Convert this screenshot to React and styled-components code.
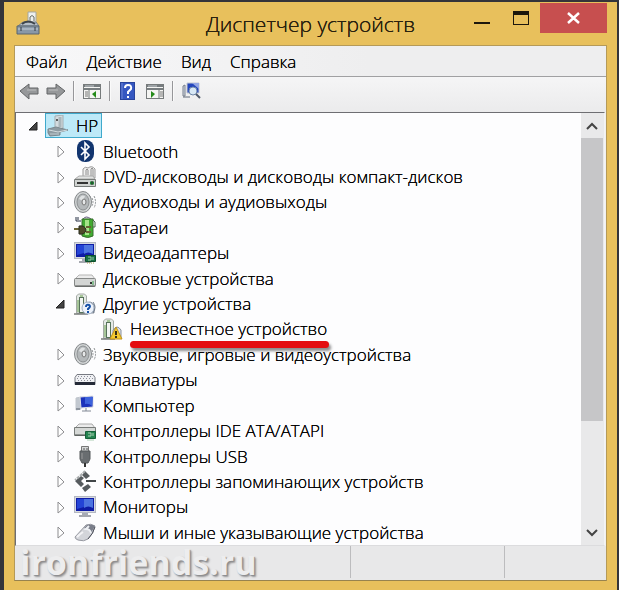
import React, { useState } from "react";
import styled, { createGlobalStyle, css } from "styled-components";

const GlobalStyle = createGlobalStyle`
  * { box-sizing: border-box; }
  body {
    margin: 0;
    background: #34343a;
    font-family: "Open Sans", "Noto Sans", sans-serif;
    font-size: 17px;
    font-weight: 300;
    color: #000;
    text-shadow: 0 0 0 #000;
  }
  button { font: inherit; color: inherit; text-shadow: inherit; border: 0; padding: 0; background: none; }
  ul { list-style: none; margin: 0; padding: 0; }
`;

const Desktop = styled.div`
  min-height: 100vh;
  display: flex;
  padding: 2px 2px 0 4px;
`;

const Window = styled.main`
  flex: 1;
  min-width: 0;
  display: flex;
  flex-direction: column;
  background: #e8c05c;
  padding: 0 10px 9px;
`;

const TitleBar = styled.header`
  height: 43px;
  display: grid;
  grid-template-columns: 1fr auto 1fr;
  align-items: start;
`;

const AppIcon = styled.span`
  padding: 9px 0 0 2px;
  line-height: 0;
`;

const Title = styled.h1`
  margin: 0;
  font-size: 21px;
  font-weight: 300;
  line-height: 44px;
  white-space: nowrap;
  color: #2a210e;
`;

const WindowControls = styled.div`
  display: flex;
  justify-content: flex-end;
  padding-top: 1px;
`;

const WindowButton = styled.button`
  width: ${(p) => (p.$close ? 67 : 39)}px;
  height: 30px;
  display: grid;
  place-items: center;
  background: ${(p) => (p.$close ? "#c74f4f" : "transparent")};
`;

const Client = styled.div`
  flex: 1;
  display: flex;
  flex-direction: column;
  background: #f0f0f1;
  border: 1px solid #b59a58;
  border-bottom-color: #98834e;
`;

const MenuBar = styled.nav`
  height: 31px;
  display: flex;
  gap: 19px;
  padding-left: 11px;
  background: linear-gradient(90deg, #f8f8f9, #eeeeef 60%);
  border-bottom: 1px solid #a0a0a2;
`;

const MenuItem = styled.button`
  line-height: 32px;
`;

const ToolBar = styled.div`
  height: 35px;
  display: flex;
  align-items: center;
  gap: 7px;
  padding: 0 4px 7px;
  background: linear-gradient(#f5f5f6, #ebebec);
`;

const ToolButton = styled.button`
  width: 20px;
  height: 22px;
  line-height: 0;
`;

const Separator = styled.span`
  width: 2px;
  height: 20px;
  border-left: 1px solid #97979a;
  border-right: 1px solid #fafafa;
`;

const TreePanel = styled.section`
  flex: 1;
  display: flex;
  margin-right: 1px;
  background: #fdfdfe;
  border: 1px solid #6e6e72;
  border-right-color: #f4f4f4;
  border-bottom-color: #dcdcde;
`;

const Tree = styled.ul`
  flex: 1;
  min-width: 0;
  display: grid;
  grid-auto-rows: minmax(25px, 1fr);
`;

const Row = styled.li`
  display: flex;
  align-items: center;
  gap: 3px;
  padding-left: ${(p) => 8 + p.$level * 27}px;
`;

const Toggle = styled.button`
  width: 18px;
  height: 18px;
  display: grid;
  place-items: center;
`;

const ToggleSpace = styled.span`
  width: 18px;
`;

const Item = styled.span`
  height: 25px;
  display: flex;
  align-items: center;
  gap: 7px;
  padding: 0 3px 0 1px;
  border: 1px solid transparent;
  white-space: nowrap;
  ${(p) =>
    p.$selected &&
    css`
      background: #bde9f8;
      border-color: #3fa9cc;
    `}
  svg { flex: none; }
`;

const ItemText = styled.span`
  position: relative;
  line-height: 23px;
`;

const MarkerLine = styled.span`
  position: absolute;
  left: 0;
  right: -2px;
  bottom: -8px;
  height: 7px;
  border-radius: 4px;
  background: #e40d10;
  box-shadow: 2px 3px 3px rgba(0, 0, 0, 0.45);
  z-index: 1;
`;

const ScrollBar = styled.div`
  width: 23px;
  padding-right: 1px;
  display: flex;
  flex-direction: column;
  background: #e9e9ea;
`;

const ScrollButton = styled.button`
  height: 25px;
  display: grid;
  place-items: center;
`;

const ScrollTrack = styled.div`
  flex: 1;
  display: flex;
  flex-direction: column;
`;

const ScrollThumb = styled.div`
  height: 74%;
  background: #c6c6c8;
`;

const StatusBar = styled.footer`
  height: 34px;
  display: grid;
  grid-template-columns: 336fr 154fr 101fr;
  background: #e8e8e9;
`;

const StatusCell = styled.div`
  border-right: 1px solid #bcbcbe;
  margin-bottom: 2px;
  &:last-child { border-right: 0; }
`;

const Watermark = styled.span`
  display: block;
  padding-left: 5px;
  font-size: 34px;
  font-weight: 700;
  line-height: 32px;
  color: #ededee;
  text-shadow: 1px 1px 1px #8d8d8f, 2px 2px 2px #99999b;
`;

const Svg = ({ children, w = 22, h = 22, box = "0 0 22 22" }) => (
  <svg width={w} height={h} viewBox={box} fill="none" aria-hidden="true">
    {children}
  </svg>
);

const CaseIcon = () => (
  <Svg w={24} h={24} box="0 0 24 24">
    <path d="M12 1h8v14h-8z" fill="#eef0ee" stroke="#a4a79f" />
    <path d="M14 10V6q2-3 4 0v4" stroke="#666d65" />
    <path d="M2 15l5-4h13l3 4z" fill="#b4bec8" stroke="#737d87" />
    <path d="M6 13q6-5 13 0" stroke="#3e454c" strokeWidth="2" />
    <path d="M1 15h22v8H1z" fill="#8998a7" stroke="#59646e" />
    <path d="M2 18h20" stroke="#c5ced8" />
    <path d="M5 16v4M19 16v4" stroke="#303942" />
  </Svg>
);

const PcCaseIcon = () => (
  <Svg>
    <path d="M8 1l8-1v13l-8 2z" fill="#d4dce0" stroke="#a3adb1" />
    <path d="M13 2v10" stroke="#aab6bb" strokeWidth="3" />
    <circle cx="10" cy="5" r="1" fill="#333" />
    <path d="M1 14l8-2 8 2 4 1-8 2v3l-10 1-2-3z" fill="#8e9ba2" stroke="#7c888e" />
    <path d="M2 15l9 2 9-2" stroke="#d5dde0" />
    <path d="M3 19h9" stroke="#bfcbd0" />
  </Svg>
);

const BluetoothIcon = () => (
  <Svg>
    <rect x="3" y="0" width="17" height="22" rx="8" fill="#12356f" />
    <path d="M7 7l8 8-4 4V3l4 4-8 8" stroke="#fff" strokeWidth="1.6" />
  </Svg>
);

const DvdIcon = () => (
  <Svg>
    <path d="M9 11V3q2-3 5-1 4-3 7 1v9z" fill="#efefef" stroke="#999" />
    <path d="M12 9V4q1-2 2 0v5M17 10V3q1-2 2 0v8" stroke="#909090" />
    <path d="M1 13l4-3h14l2 3z" fill="#e1e3e2" stroke="#aaa" />
    <path d="M.5 13.5h21v7H.5z" fill="#d0d3d1" stroke="#767a78" />
    <path d="M3 17h11" stroke="#333" strokeWidth="2" />
    <path d="M16 17h4" stroke="#248a3b" strokeWidth="3" />
    <path d="M18 15v4" stroke="#222" />
  </Svg>
);

const SpeakerIcon = () => (
  <Svg>
    <path d="M11 1l5 4v11l-5 5z" fill="#9c9fa0" stroke="#777" />
    <ellipse cx="9" cy="11" rx="8.5" ry="10.5" fill="#d0d3d4" stroke="#85898b" />
    <ellipse cx="9" cy="11" rx="6" ry="8" fill="#b4b8ba" stroke="#8d9193" />
    <path d="M5 8q2-5 6-3l-2 5z" fill="#dfe2e3" />
    <ellipse cx="10" cy="11" rx="2" ry="3" fill="#e6e8e9" stroke="#777" />
    <path d="M18 7q2 4 0 8M20 5q3 6 0 12" stroke="#8d9193" strokeDasharray="2 1" />
  </Svg>
);

const BatteryIcon = () => (
  <Svg>
    <path d="M9 3q3-4 8 0" fill="#d8ded8" stroke="#6a5f85" />
    <path d="M8 3h11v17q-5 3-11 0z" fill="#42aa31" stroke="#376e2c" />
    <path d="M13 4v15" stroke="#a5e388" strokeWidth="4" />
    <path d="M2 1v4h5M4 1v3" stroke="#273044" />
    <path d="M0 13h6M12 11h5M12 16h5" stroke="#6a6435" strokeWidth="2" />
    <path d="M5 10q6-1 7 4-1 5-7 4z" fill="#504b2a" stroke="#292c20" />
    <path d="M19 4l2 2v5h-2" stroke="#4b6650" />
  </Svg>
);

const MonitorShape = () => (
  <>
    <rect x="0.5" y="0.5" width="21" height="16" fill="#d6d9e0" stroke="#b4b8c2" />
    <rect x="2" y="2" width="18" height="13" fill="#0f1ca6" />
    <path d="M10 3h9v9q-5-3-9 0z" fill="#4d74e0" />
    <path d="M3 3h7v8l-7 2z" fill="#2444d6" />
    <path d="M8 17h6v2H8z" fill="#a7abb6" />
    <path d="M5 20h12" stroke="#4d5361" />
  </>
);

const MonitorIcon = () => (
  <Svg>
    <MonitorShape />
  </Svg>
);

const VideoIcon = () => (
  <Svg>
    <MonitorShape />
    <path d="M11.5 13.5h10v6h-10z" fill="#176f44" stroke="#0c4e2d" />
    <path d="M14 15h3v3h-3M19 15v3" stroke="#9bc9a3" />
    <path d="M13 21h8" stroke="#a79d4b" strokeDasharray="1 1" />
  </Svg>
);

const DiskIcon = () => (
  <Svg>
    <path d="M1 12l4-4h13l3 4z" fill="#ececec" stroke="#b5b5b5" />
    <rect x="0.5" y="11.5" width="21" height="8" rx="1" fill="#d3d5d4" stroke="#858887" />
    <path d="M1 19h20" stroke="#525554" />
    <path d="M16 16h2" stroke="#333" strokeWidth="2" />
    <path d="M19 14v4" stroke="#39a14b" />
  </Svg>
);

const DeviceBase = () => (
  <>
    <path d="M2.5 20V3l2-2h6l2 2v17z" fill="#e4e9e5" stroke="#a5aba6" />
    <rect x="5.5" y="4.5" width="4" height="15" fill="#f4f6f3" stroke="#57735b" />
    <path d="M6 3h3M4 7v12" stroke="#69a04b" />
    <path d="M0 21h14" stroke="#343b36" />
    <path d="M12 12q4-6 8 0v8h-8z" fill="#dce2ea" stroke="#89909a" />
  </>
);

const OtherIcon = () => (
  <Svg>
    <DeviceBase />
    <circle cx="14" cy="15" r="6" fill="#edf2fa" stroke="#a3b2c6" />
    <path d="M19 9q4 5 0 11" stroke="#6c7888" />
    <path d="M12 14q0-3 3-2 2 1 0 3l-1 1v1M14 18v2" stroke="#1752a8" strokeWidth="2" />
  </Svg>
);

const UnknownIcon = () => (
  <Svg>
    <DeviceBase />
    <path d="M15 9l6 12H9z" fill="#f4cb2e" stroke="#c0921a" />
    <path d="M15 13v4M15 18v2" stroke="#352d14" strokeWidth="2" />
  </Svg>
);

const KeyboardIcon = () => (
  <Svg>
    <path d="M3 5.500h16l2 3v7H1v-7z" fill="#f0f1f4" stroke="#777a82" />
    <path d="M4 7.500h14M3 9.500h16M4 11.500h14" stroke="#8d909a" strokeDasharray="1 2" />
    <path d="M1 13h20v3H1z" fill="#252a38" />
  </Svg>
);

const ComputerIcon = () => (
  <Svg>
    <path d="M2 4l5-1v12l-5 1z" fill="#c2c8d0" stroke="#c0c5cc" />
    <path d="M6 3l13-1v11l-12 1z" fill="#1b31bb" stroke="#dde0e6" />
    <path d="M11 3h8l-1 9q-3-3-7-2z" fill="#3d62dc" />
    <path d="M12 14v3M8 17h9" stroke="#818894" />
    <path d="M2 14h4v2H2z" fill="#8d949e" />
  </Svg>
);

const IdeIcon = () => (
  <Svg>
    <path d="M1 8l4-4h13l3 4z" fill="#ececec" stroke="#aaa" />
    <path d="M.5 7.5h21v8H.5z" fill="#d5d8d6" stroke="#777b79" />
    <path d="M1 15h10" stroke="#4b504e" />
    <path d="M11.5 11.5h10v7h-10z" fill="#248450" stroke="#176039" />
    <path d="M14 13h3v3h-3M19 13v3M13 20h7" stroke="#aed0b4" />
  </Svg>
);

const UsbIcon = () => (
  <Svg>
    <path d="M7.5 1.5h7v6h-7z" fill="#d5d7d8" stroke="#777" />
    <path d="M10 3v2M13 3v2" stroke="#555" />
    <path d="M6 6h10v8l-2 4H8l-2-4z" fill="#696d70" stroke="#55585b" />
    <path d="M8 8v6" stroke="#999" />
    <path d="M11 18v4" stroke="#333" strokeWidth="2" />
  </Svg>
);

const StorageIcon = () => (
  <Svg>
    <path d="M16 6l-5-5-3 4 4 4zM7 6l-6 5 6 6 3-3-3-3 3-3zM8 18l3 4 6-5-3-3z" fill="#565b5e" />
    <path d="M11 1l-4 4-6 5" stroke="#a9adae" strokeWidth="2" strokeDasharray="3 1" />
    <path d="M12 11h10" stroke="#414648" strokeWidth="2" />
  </Svg>
);

const MouseIcon = () => (
  <Svg>
    <path d="M1 16L12 4q5-2 9 1-1 7-7 13-4 3-10 1-3-1-3-3z" fill="#d3d5da" stroke="#9698a0" />
    <path d="M13 4q5-1 8 1l-4 7q-1-5-7-5z" fill="#7a7e8a" />
    <path d="M15 5l-3 3q4 0 5 4" stroke="#eef0f4" strokeWidth="2" />
    <path d="M14 18q5-5 7-12" stroke="#4f525d" />
    <path d="M3 16q3-3 6-5" stroke="#f3f3f6" strokeWidth="2" />
  </Svg>
);

const ArrowIcon = ({ right }) => (
  <Svg w={20} box="0 0 20 22">
    <path
      d={right ? "M1 8h9V4l9 7-9 8v-5H1z" : "M19 8h-9V4l-9 7 9 8v-5h9z"}
      fill="#96989a"
      stroke="#626466"
    />
    <path d={right ? "M3 10h9" : "M8 10h9"} stroke="#bcbdbe" />
  </Svg>
);

const PaneIcon = ({ right }) => (
  <Svg w={20} box="0 0 20 22">
    <rect x="1.5" y="4.5" width="17" height="14" fill="#f5f5f3" stroke="#777b7c" />
    <path d="M2 6h16M2 9h16" stroke="#777d80" strokeWidth="2" />
    <path d="M3 6h9" stroke="#c7cccf" />
    <path d={right ? "M14 9v9" : "M7 9v9"} stroke="#737879" />
    <path d={right ? "M15 12h3m-3 2h3m-3 2h3" : "M3 12h3m-3 2h3m-3 2h3"} stroke="#777" />
    <path d={right ? "M6 11l4 3-4 4z" : "M14 11l-4 3 4 4z"} fill="#258b19" />
  </Svg>
);

const HelpIcon = () => (
  <Svg w={20} box="0 0 20 22">
    <rect x="2.5" y="2.5" width="14" height="17" fill="#3557c1" stroke="#29449c" />
    <path d="M4 3v16" stroke="#7187d5" />
    <path d="M7 8q0-3 3-3 4 0 3 4l-3 3v2M10 16v2" stroke="#fff" strokeWidth="2" />
  </Svg>
);

const ScanIcon = () => (
  <Svg w={20} box="0 0 20 22">
    <path d="M2 6v10h2V5z" fill="#d5dbe4" stroke="#767f8b" />
    <path d="M6 3h12v10H6z" fill="#2446bd" stroke="#c2c7d0" />
    <path d="M11 3h7v6z" fill="#93a6e4" />
    <path d="M2 17h7" stroke="#616a79" />
    <circle cx="12" cy="11" r="4" fill="#d8e8f5" stroke="#6d86a8" />
    <path d="M15 14l4 4" stroke="#4e5867" strokeWidth="2" />
  </Svg>
);

const Triangle = ({ open }) => (
  <Svg w={14} h={14} box="0 0 14 14">
    {open ? (
      <path d="M11 3v8H3z" fill="#444" stroke="#222" />
    ) : (
      <path d="M5 2l6 6-6 5z" fill="#fff" stroke="#8d8d90" />
    )}
  </Svg>
);

const devices = [
  { name: "HP", icon: PcCaseIcon, level: 0, open: true },
  { name: "Bluetooth", icon: BluetoothIcon, level: 1 },
  { name: "DVD-дисководы и дисководы компакт-дисков", icon: DvdIcon, level: 1 },
  { name: "Аудиовходы и аудиовыходы", icon: SpeakerIcon, level: 1 },
  { name: "Батареи", icon: BatteryIcon, level: 1 },
  { name: "Видеоадаптеры", icon: VideoIcon, level: 1 },
  { name: "Дисковые устройства", icon: DiskIcon, level: 1 },
  { name: "Другие устройства", icon: OtherIcon, level: 1, open: true },
  { name: "Неизвестное устройство", icon: UnknownIcon, level: 2, leaf: true, marked: true },
  { name: "Звуковые, игровые и видеоустройства", icon: SpeakerIcon, level: 1 },
  { name: "Клавиатуры", icon: KeyboardIcon, level: 1 },
  { name: "Компьютер", icon: ComputerIcon, level: 1 },
  { name: "Контроллеры IDE ATA/ATAPI", icon: IdeIcon, level: 1 },
  { name: "Контроллеры USB", icon: UsbIcon, level: 1 },
  { name: "Контроллеры запоминающих устройств", icon: StorageIcon, level: 1 },
  { name: "Мониторы", icon: MonitorIcon, level: 1 },
  { name: "Мыши и иные указывающие устройства", icon: MouseIcon, level: 1 },
];

const menus = ["Файл", "Действие", "Вид", "Справка"];

export default function App() {
  const [selected, setSelected] = useState("HP");

  return (
    <>
      <GlobalStyle />
      <Desktop>
        <Window>
          <TitleBar>
            <AppIcon><CaseIcon /></AppIcon>
            <Title>Диспетчер устройств</Title>
            <WindowControls>
              <WindowButton aria-label="Свернуть">
                <Svg w={18} h={18} box="0 0 18 18">
                  <path d="M1 14h16" stroke="#1c170c" strokeWidth="2" />
                </Svg>
              </WindowButton>
              <WindowButton aria-label="Развернуть">
                <Svg w={18} h={18} box="0 0 18 18">
                  <rect x="1.5" y="3.5" width="15" height="12" stroke="#1c170c" />
                  <path d="M1 4h16" stroke="#1c170c" strokeWidth="4" />
                </Svg>
              </WindowButton>
              <WindowButton $close aria-label="Закрыть">
                <Svg w={14} h={14} box="0 0 14 14">
                  <path d="M1 2l11 10M12 2L1 12" stroke="#fff" strokeWidth="2.5" />
                </Svg>
              </WindowButton>
            </WindowControls>
          </TitleBar>
          <Client>
            <MenuBar>
              {menus.map((m) => <MenuItem key={m}>{m}</MenuItem>)}
            </MenuBar>
            <ToolBar role="toolbar">
              <ToolButton aria-label="Назад"><ArrowIcon /></ToolButton>
              <ToolButton aria-label="Вперёд"><ArrowIcon right /></ToolButton>
              <Separator />
              <ToolButton aria-label="Дерево консоли"><PaneIcon /></ToolButton>
              <Separator />
              <ToolButton aria-label="Справка"><HelpIcon /></ToolButton>
              <ToolButton aria-label="Панель действий"><PaneIcon right /></ToolButton>
              <Separator />
              <ToolButton aria-label="Обновить конфигурацию"><ScanIcon /></ToolButton>
            </ToolBar>
            <TreePanel>
              <Tree role="tree">
                {devices.map(({ name, icon: Icon, level, open, leaf, marked }) => (
                  <Row
                    key={name}
                    role="treeitem"
                    aria-level={level + 1}
                    aria-selected={selected === name}
                    aria-expanded={leaf ? undefined : !!open}
                    $level={level}
                  >
                    {leaf ? (
                      <ToggleSpace />
                    ) : (
                      <Toggle aria-label={name}><Triangle open={open} /></Toggle>
                    )}
                    <Item $selected={selected === name} onClick={() => setSelected(name)}>
                      <Icon />
                      <ItemText>
                        {name}
                        {marked && <MarkerLine />}
                      </ItemText>
                    </Item>
                  </Row>
                ))}
              </Tree>
              <ScrollBar>
                <ScrollButton aria-label="Вверх">
                  <Svg w={12} h={12} box="0 0 12 12">
                    <path d="M1 9l5-5 5 5" stroke="#444" strokeWidth="2" />
                  </Svg>
                </ScrollButton>
                <ScrollTrack><ScrollThumb /></ScrollTrack>
                <ScrollButton aria-label="Вниз">
                  <Svg w={12} h={12} box="0 0 12 12">
                    <path d="M1 3l5 5 5-5" stroke="#444" strokeWidth="2" />
                  </Svg>
                </ScrollButton>
              </ScrollBar>
            </TreePanel>
            <StatusBar>
              <StatusCell><Watermark>ironfriends.ru</Watermark></StatusCell>
              <StatusCell />
              <StatusCell />
            </StatusBar>
          </Client>
        </Window>
      </Desktop>
    </>
  );
}
